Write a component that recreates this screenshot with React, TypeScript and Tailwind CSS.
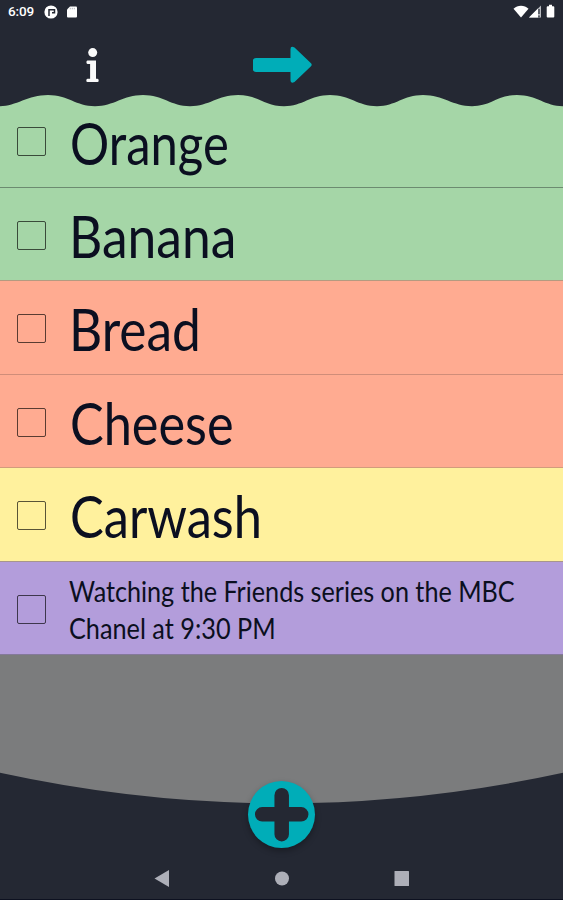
import type { ReactNode } from "react";

type Item = { label: string; row: string; fit: string };

const items: Item[] = [
  { label: "Orange", row: "h-[94px] bg-[#a5d6a7] border-[#6c8b70]", fit: "mt-[13px] ml-px scale-x-[0.83]" },
  { label: "Banana", row: "h-[93px] bg-[#a5d6a7] border-[#b59a80]", fit: "mt-[12px] scale-x-[0.874]" },
  { label: "Bread", row: "h-[94px] bg-[#ffab91] border-[#d08d79]", fit: "mt-[12px] scale-x-[0.872]" },
  { label: "Cheese", row: "h-[93px] bg-[#ffab91] border-[#d29c7c]", fit: "mt-[12px] ml-px scale-x-[0.855]" },
  { label: "Carwash", row: "h-[94px] bg-[#fff19d] border-[#a7958c]", fit: "mt-[12px] ml-px scale-x-[0.857]" },
];

function Row({ className, children }: { className: string; children: ReactNode }) {
  return (
    <li className={`flex shrink-0 border-b pl-[17px] ${className}`}>
      <span className="mt-[33px] block size-[29px] shrink-0 rounded-[2px] border border-black/65" />
      <div className="ml-[23px] min-w-0 whitespace-nowrap text-[#0b0f20]">{children}</div>
    </li>
  );
}

function StatusBar() {
  return (
    <div className="flex h-6 items-center pr-[6px] pl-2 text-white">
      <span className="w-[27px] font-[Roboto,sans-serif] text-[13.5px] leading-none font-medium tracking-[-0.1px]">6:09</span>
      <svg className="ml-[9px]" width="14" height="14" viewBox="0 0 14 14">
        <circle cx="7" cy="7" r="6.6" fill="#fff" />
        <path d="M5 11V4.700h5.500v3H8" fill="none" stroke="#242833" strokeWidth="1.500" />
      </svg>
      <svg className="ml-[8px]" width="12" height="12" viewBox="0 0 12 12">
        <path d="M4 .5h6a1 1 0 0 1 1 1v9a1 1 0 0 1-1 1H2a1 1 0 0 1-1-1V3.5z" fill="#fff" />
        <path d="M4.3 1.8v1.500M6.3 1.8v1.500M8.3 1.8v1.500" stroke="#a0a3aa" strokeWidth=".8" />
      </svg>
      <svg className="ml-auto" width="44" height="16" viewBox="0 0 44 16">
        <path d="M.5 4.800C4.500.600 11.500.600 15.500 4.800L8 13.500z" fill="#fff" />
        <path d="M16 13.500 28 1.500v12z" fill="#b9bbc0" />
        <path d="M16 13.500 25 4.500v9z" fill="#fff" />
        <path d="M26 5v5M26 11.500v1.500" stroke="#242833" strokeWidth="1.200" />
        <path d="M36 .8h3v1.400h1.300a1 1 0 0 1 1 1v9.300a1 1 0 0 1-1 1h-5.600a1 1 0 0 1-1-1V3.200a1 1 0 0 1 1-1H36z" fill="#fff" />
      </svg>
    </div>
  );
}

export default function App() {
  return (
    <div className="relative flex h-[900px] w-[563px] flex-col overflow-hidden bg-[#7b7c7d] font-[Lato,sans-serif]">
      <header className="h-[94px] shrink-0 bg-[#242833]">
        <StatusBar />
        <div className="flex pt-[22px] pl-[86px]">
          <svg className="mt-[1px]" width="13" height="37" viewBox="0 0 13 37">
            <circle cx="6.700" cy="5.600" r="4.500" fill="#fafafa" />
            <path d="M1.600 13.500h8.400v18.200h1.500q1.200 0 1.200 1.700t-1.200 1.700h-10q-1.200 0-1.200-1.700t1.200-1.700h2.600V17H1.600Q.4 17 .4 15.200t1.200-1.700z" fill="#fafafa" />
          </svg>
          <svg className="ml-[154px]" width="60" height="38" viewBox="0 0 60 38">
            <path d="M3 12H37.500V3.200q0-3.700 4-1.700L58 17.300q1.400 1.500 0 3L41.500 36q-4 2-4-1.700V26H3q-3.200 0-3.200-3.200v-7.600Q-.2 12 3 12z" fill="#00adb8" />
          </svg>
        </div>
      </header>

      <ul className="flex flex-col">
        {items.map((item) => (
          <Row key={item.label} className={item.row}>
            <span className={`inline-block origin-left text-[59px] leading-[72px] ${item.fit}`}>{item.label}</span>
          </Row>
        ))}
        <Row className="h-[93px] bg-[#b39ddb] border-[#84799a]">
          <p className="mt-[11px] text-[28px] leading-[37px]">
            <span className="block w-max origin-left scale-x-[0.899]">Watching the Friends series on the MBC</span>
            <span className="block w-max origin-left scale-x-[0.902]">Chanel at 9:30 PM</span>
          </p>
        </Row>
      </ul>

      <svg className="absolute top-[93px] left-0" width="563" height="15" viewBox="0 0 563 15">
        <path
          d="M0 0V13.200C16 13.200 28 2 48 2S76 13.200 95 13.200S123 2 143 2S171 13.200 190 13.200S218 2 238 2S265 13.200 284 13.200S310 2 330 2S358 13.200 377 13.200S403 2 423 2S453 13.200 472 13.200S497 2 517 2S545 13.200 563 13.200V0Z"
          fill="#242833"
        />
      </svg>

      <footer className="mt-auto h-[128px] border-b border-[#0d1120]">
        <svg width="563" height="127" viewBox="0 0 563 127">
          <path d="M0 .8Q281.500 62 563 .8V127H0z" fill="#242833" />
          <path d="M154.500 106.500 169 98v17z" fill="#adafb8" />
          <circle cx="282" cy="106.500" r="7" fill="#adafb8" />
          <rect x="394.500" y="99" width="14.500" height="15" rx=".5" fill="#adafb8" />
        </svg>
      </footer>

      <button aria-label="Add" className="absolute top-[781px] left-[248px] size-[67px] rounded-full bg-[#00adb8] shadow-[0_3px_6px_rgba(0,0,0,0.3)]">
        <svg className="block" width="67" height="67" viewBox="0 0 67 67">
          <path d="M33.700 14.200v39M14.200 33.300h39" stroke="#242833" strokeWidth="14.500" strokeLinecap="round" />
        </svg>
      </button>
    </div>
  );
}
